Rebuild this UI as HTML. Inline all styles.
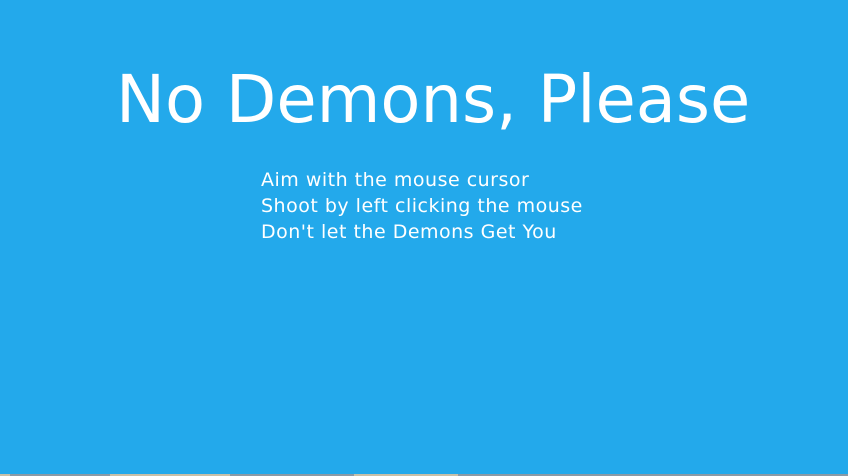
<!DOCTYPE html>
<html><head><style>
html,body{margin:0;padding:0;}
body{width:848px;height:476px;background:#23a9eb;position:relative;overflow:hidden;font-family:"DejaVu Sans",sans-serif;color:#fff;}
h1{position:absolute;left:116px;top:60px;margin:0;font-weight:normal;font-size:65.5px;line-height:80px;white-space:nowrap;}
.t{position:absolute;left:261px;top:167px;font-size:19px;letter-spacing:0.5px;line-height:26px;white-space:nowrap;}
.bar{position:absolute;left:0;top:474px;width:848px;height:2px;background:#8a9aa6;}
.bar i{position:absolute;top:0;height:2px;background:#c8c0a8;}
</style></head><body>
<h1>No Demons, Please</h1>
<div class="t">Aim with the mouse cursor<br>Shoot by left clicking the mouse<br>Don't let the Demons Get You</div>
<div class="bar"><i style="left:0;width:10px"></i><i style="left:110px;width:120px"></i><i style="left:354px;width:104px"></i></div>
</body></html>
